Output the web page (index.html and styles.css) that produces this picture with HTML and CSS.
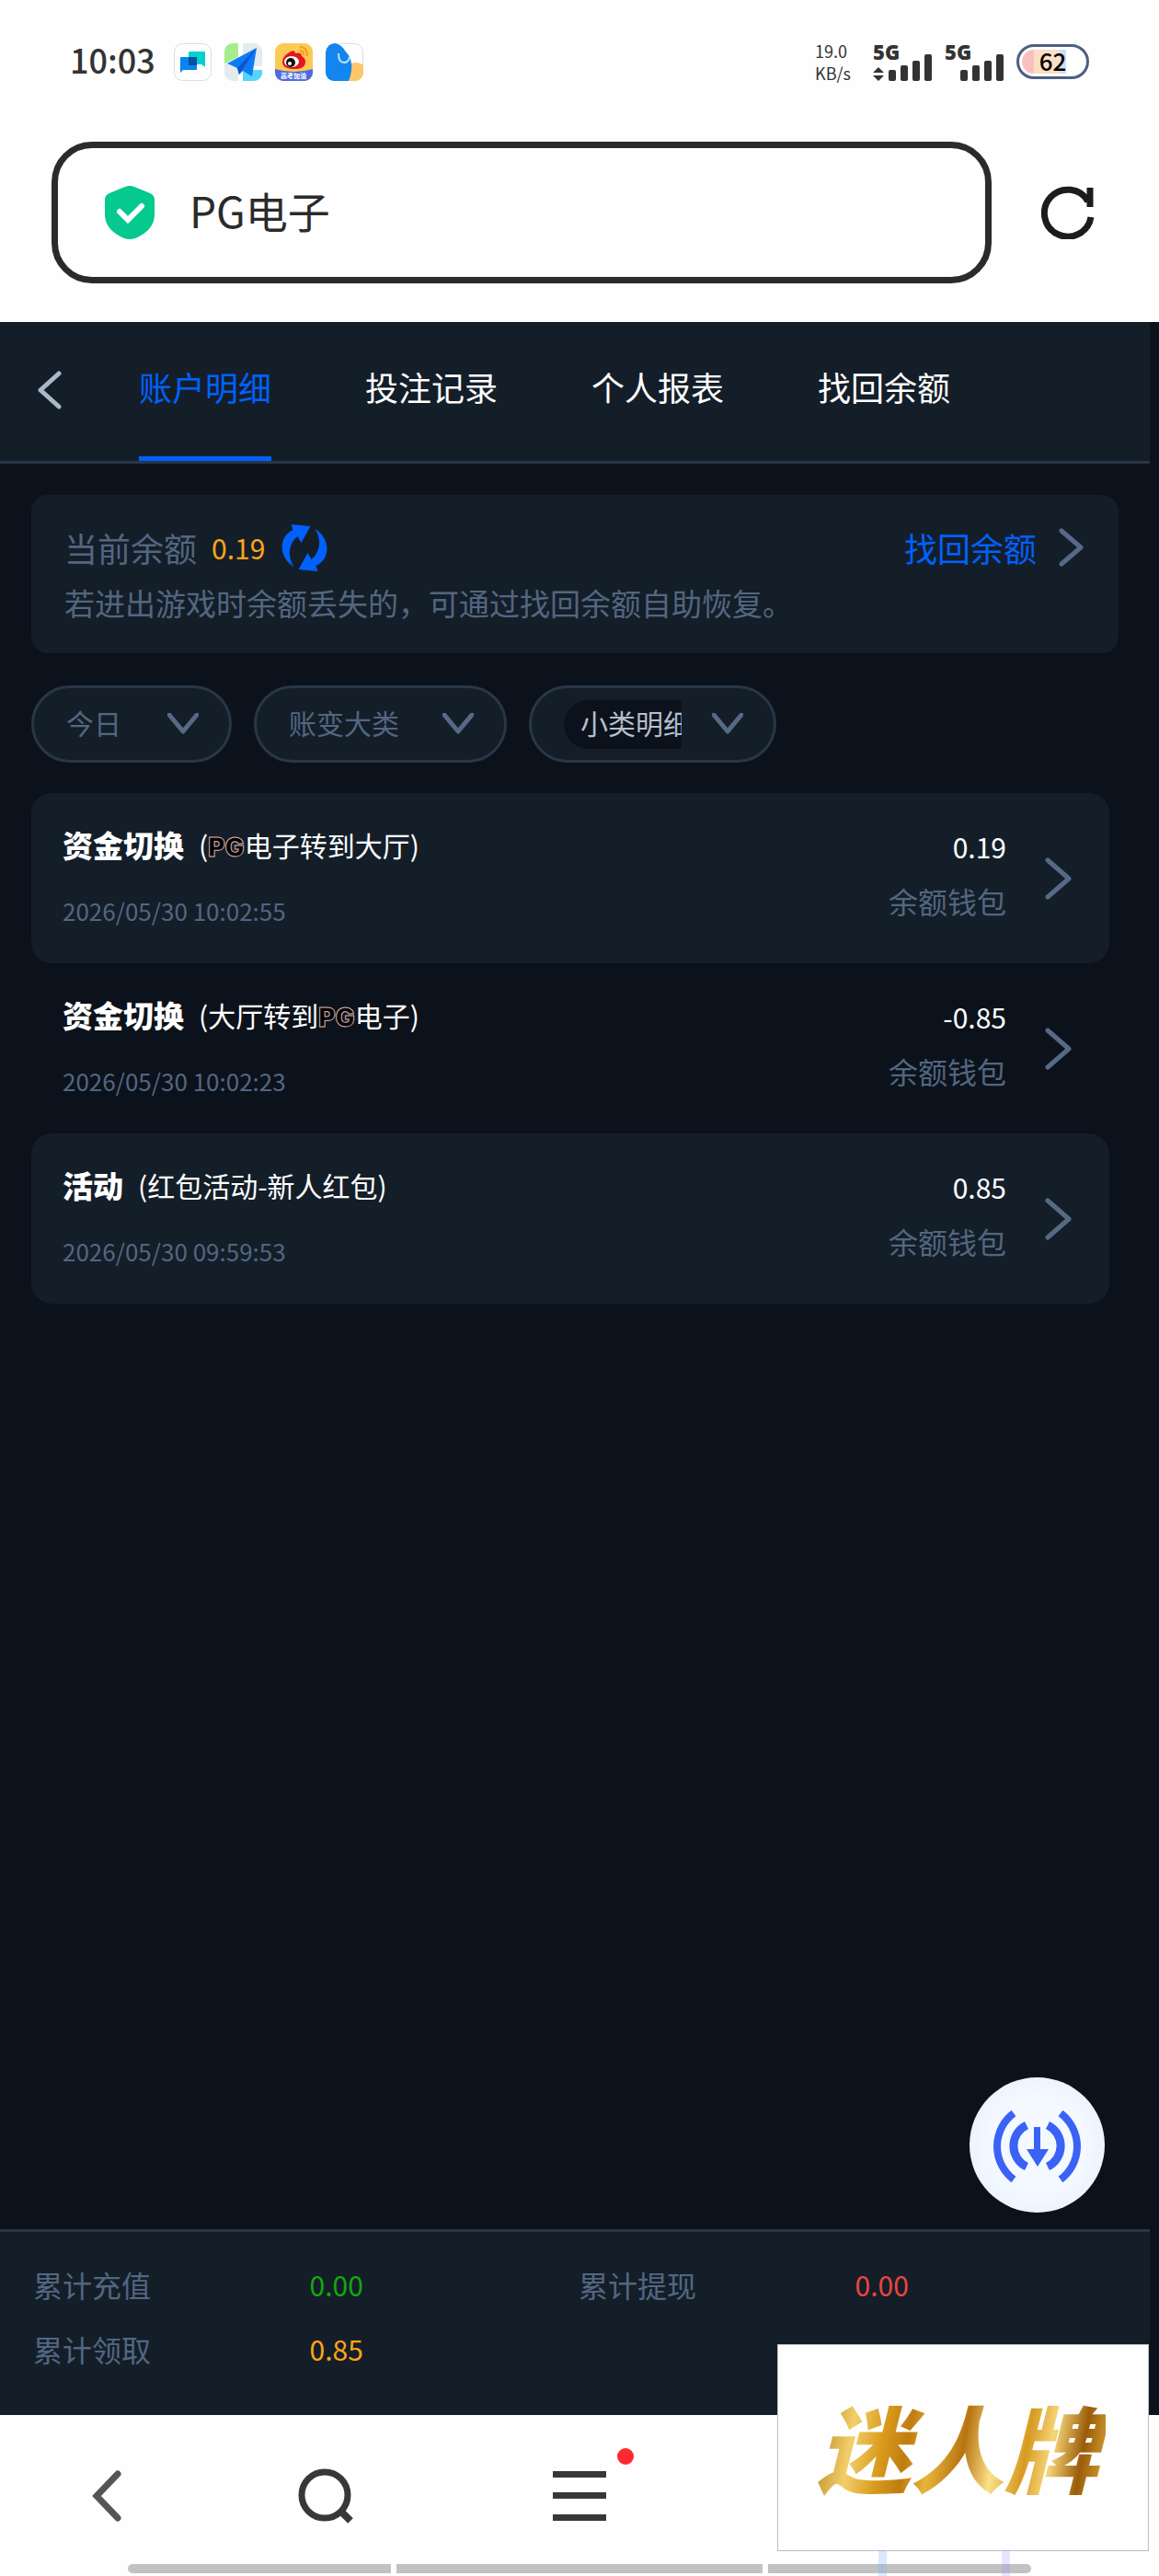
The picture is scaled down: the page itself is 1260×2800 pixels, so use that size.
FILE: index.html
```html
<!DOCTYPE html>
<html lang="zh-Hans">
<head>
<meta charset="utf-8">
<meta name="viewport" content="width=device-width, initial-scale=1">
<title>PG电子</title>
<link rel="stylesheet" href="styles.css">
</head>
<body>

<!-- 状态栏 -->
<div class="status-bar">
  <span class="time">10:03</span>
  <div class="apps">
    <svg width="41" height="41" viewBox="0 0 41 41">
      <rect x="0.5" y="0.5" width="40" height="40" rx="9" fill="#fff" stroke="#ddd"/>
      <path d="M17 9h16q1 0 1 1v16l-4-3H16V10q0-1 1-1z" fill="#05d0cf"/>
      <path d="M8 15h17v14H10l-3 3V16q0-1 1-1z" fill="#0a84f0"/>
      <path d="M16 15h9v9h-9z" fill="#0a4fa5"/>
    </svg>
    <svg width="41" height="41" viewBox="0 0 41 41">
      <clipPath id="r1"><rect width="41" height="41" rx="9"/></clipPath>
      <g clip-path="url(#r1)">
        <rect width="41" height="41" fill="#e4ebef"/>
        <path d="M0 0h15v15L0 22z" fill="#a6ec8b"/>
        <path d="M15 0h5v41h-5z" fill="#fff"/>
        <path d="M20 25l21 2v14H20z" fill="#55d5fb"/>
        <path d="M20 25h21v4H20z" fill="#fff"/>
        <path d="M35 5L3 22l11 5 2 7 4-4 10 6z" fill="#0d7bf5"/>
        <path d="M35 5L14 27l2 7 4-6z" fill="#0a55cc"/>
      </g>
    </svg>
    <svg width="41" height="41" viewBox="0 0 41 41">
      <clipPath id="r2"><rect width="41" height="41" rx="9"/></clipPath>
      <g clip-path="url(#r2)">
        <rect width="41" height="41" fill="#fdc955"/>
        <path d="M0 28q20 6 41 0v13H0z" fill="#4b6ce0"/>
        <path d="M8 20q0-6 9-11 5-2 5 2 7-2 7 3 4 2 4 6 0 8-12 8-13 0-13-8z" fill="#e6151b"/>
        <ellipse cx="18" cy="20" rx="8" ry="6" fill="#fff"/>
        <circle cx="17" cy="21" r="5" fill="#111"/>
        <circle cx="16" cy="22" r="2" fill="#fff"/>
        <path d="M27 4q8 0 8 10M27 8q4 0 4 5" fill="none" stroke="#f59a1b" stroke-width="2"/>
        <text x="20" y="38" font-size="7" font-weight="700" text-anchor="middle" fill="#fff">高考加油</text>
      </g>
    </svg>
    <svg width="41" height="41" viewBox="0 0 41 41">
      <clipPath id="r3"><rect width="41" height="41" rx="9"/></clipPath>
      <rect x="0.5" y="0.5" width="40" height="40" rx="9" fill="#fff" stroke="#ddd"/>
      <g clip-path="url(#r3)">
        <circle cx="33" cy="34" r="13" fill="#fdc66b"/>
        <path d="M0 10Q2 0 10 0q7 1 11 8 9 9 7 22-1 6-3 11H0z" fill="#1286ee"/>
        <path d="M14 11q0 10 6 10 5 0 6-6" fill="none" stroke="#bfe0ff" stroke-width="2"/>
      </g>
    </svg>
  </div>
  <div class="net-speed"><span>19.0</span><span>KB/s</span></div>
  <div class="signal">
    <span>5G</span>
    <svg width="64" height="30" viewBox="0 0 64 30">
      <path d="M0 21l6-6 6 6zM0 24h12l-6 6z"/>
      <rect x="17" y="18" width="8" height="12" rx="2"/>
      <rect x="30" y="13" width="8" height="17" rx="2"/>
      <rect x="43" y="8" width="8" height="22" rx="2"/>
      <rect x="56" y="1" width="8" height="29" rx="2"/>
    </svg>
  </div>
  <div class="signal">
    <span>5G</span>
    <svg width="64" height="30" viewBox="0 0 64 30">
      <rect x="17" y="18" width="8" height="12" rx="2"/>
      <rect x="30" y="13" width="8" height="17" rx="2"/>
      <rect x="43" y="8" width="8" height="22" rx="2"/>
      <rect x="56" y="1" width="8" height="29" rx="2"/>
    </svg>
  </div>
  <div class="battery">62</div>
</div>

<!-- 地址栏 -->
<div class="address-row">
  <label class="address">
    <svg width="54" height="58" viewBox="0 0 54 58">
      <path d="M22 1q5-2 10 0l17 7q5 2 5 7v16q0 17-21 26-6 2-12 0Q0 48 0 31V15q0-5 5-7z" fill="#05c98f"/>
      <path d="M16 28l9 9 15-15" fill="none" stroke="#fff" stroke-width="6" stroke-linecap="round"/>
    </svg>
    <input type="text" value="PG电子" aria-label="地址">
  </label>
  <button class="reload" aria-label="刷新">
    <svg width="58" height="58" viewBox="0 0 58 58" fill="none" stroke="#1c1c1c" stroke-width="7">
      <path d="M54 34A25.500 25.500 0 1 1 51 17"/>
      <path d="M53 2v21"/>
    </svg>
  </button>
</div>

<div class="page">
  <nav class="tabs">
    <button class="back" aria-label="返回">
      <svg width="26" height="42" viewBox="0 0 26 42"><path d="M23 3L3 21l20 18"/></svg>
    </button>
    <a href="#" class="tab active">账户明细</a>
    <a href="#" class="tab">投注记录</a>
    <a href="#" class="tab">个人报表</a>
    <a href="#" class="tab">找回余额</a>
  </nav>

  <main>
    <section class="balance">
      <div class="balance-line">
        <span>当前余额</span>
        <span class="balance-num">0.19</span>
        <button class="sync" aria-label="刷新余额">
          <svg width="50" height="51" viewBox="0 0 49 51" fill="#0061ff">
            <path id="arr" d="M13 46C-3 37-5 14 12 6L10 0l21 2-10 18-4-7C8 20 5 34 13 46z"/>
            <use href="#arr" transform="rotate(180 24.5 25.5)"/>
          </svg>
        </button>
        <a href="#" class="recover">找回余额
          <svg width="27" height="42" viewBox="0 0 27 42"><path d="M3 3l21 18L3 39"/></svg>
        </a>
      </div>
      <p class="tip">若进出游戏时余额丢失的，可通过找回余额自助恢复。</p>
    </section>

    <div class="filters">
      <label class="pill">
        <select class="day" aria-label="日期"><option>今日</option></select>
        <svg width="34" height="24" viewBox="0 0 34 24"><path d="M2 2l15 18L32 2"/></svg>
      </label>
      <label class="pill">
        <select class="kind" aria-label="账变大类"><option>账变大类</option></select>
        <svg width="34" height="24" viewBox="0 0 34 24"><path d="M2 2l15 18L32 2"/></svg>
      </label>
      <label class="pill">
        <select class="sub" aria-label="小类明细"><option>小类明细</option></select>
        <svg width="34" height="24" viewBox="0 0 34 24"><path d="M2 2l15 18L32 2"/></svg>
      </label>
    </div>

    <ul class="records">
      <li>
        <a href="#" class="record">
          <div class="info">
            <div class="name"><b>资金切换</b><span>(<span class="pg">PG</span>电子转到大厅)</span></div>
            <time>2026/05/30 10:02:55</time>
          </div>
          <div class="money"><span class="amount">0.19</span><span class="wallet">余额钱包</span></div>
          <svg width="30" height="46" viewBox="0 0 30 46"><path d="M3 3l23 20L3 43"/></svg>
        </a>
      </li>
      <li>
        <a href="#" class="record">
          <div class="info">
            <div class="name"><b>资金切换</b><span>(大厅转到<span class="pg">PG</span>电子)</span></div>
            <time>2026/05/30 10:02:23</time>
          </div>
          <div class="money"><span class="amount">-0.85</span><span class="wallet">余额钱包</span></div>
          <svg width="30" height="46" viewBox="0 0 30 46"><path d="M3 3l23 20L3 43"/></svg>
        </a>
      </li>
      <li>
        <a href="#" class="record">
          <div class="info">
            <div class="name"><b>活动</b><span>(红包活动-新人红包)</span></div>
            <time>2026/05/30 09:59:53</time>
          </div>
          <div class="money"><span class="amount">0.85</span><span class="wallet">余额钱包</span></div>
          <svg width="30" height="46" viewBox="0 0 30 46"><path d="M3 3l23 20L3 43"/></svg>
        </a>
      </li>
    </ul>
  </main>

  <footer class="summary">
    <span>累计充值</span><span class="green">0.00</span>
    <span>累计提现</span><span class="red">0.00</span>
    <span>累计领取</span><span class="orange">0.85</span>
  </footer>
</div>

<!-- 浏览器底栏 -->
<div class="browser-nav">
  <div class="nav-btns">
    <button aria-label="后退">
      <svg width="32" height="56" viewBox="0 0 32 56" fill="none" stroke="#555" stroke-width="7" stroke-linecap="round"><path d="M28 4L5 28l23 24"/></svg>
    </button>
    <button aria-label="搜索">
      <svg width="60" height="60" viewBox="0 0 60 60" fill="none" stroke="#383838" stroke-width="7"><circle cx="29" cy="29" r="25"/><path d="M46 46l11 11" stroke-width="8"/></svg>
    </button>
    <button class="menu" aria-label="菜单">
      <svg width="58" height="54" viewBox="0 0 58 54" fill="#383838"><path d="M0 0h58v7H0zM0 23h58v7H0zM0 47h58v7H0z"/></svg>
      <span class="dot"></span>
    </button>
  </div>
  <div class="home-bar"><i></i><i></i><i></i></div>
</div>

<button class="float-btn" aria-label="下载">
  <svg width="147" height="147" viewBox="0 0 147 147" fill="none" stroke="#3b62f6" stroke-width="8">
    <path d="M48 39A45 45 0 0 0 48 111M99 39A45 45 0 0 1 99 111"/>
    <path d="M62 52A25 25 0 0 0 62 97M85 52A25 25 0 0 1 85 97" stroke-width="9"/>
    <path d="M70 54h7v24h9L74 97 62 78h8z" fill="#3b62f6" stroke="none"/>
  </svg>
</button>

<div class="brand"><span>迷人牌</span></div>

</body>
</html>
```
FILE: styles.css
```css
* {
  box-sizing: border-box;
}
body {
  margin: 0;
  min-height: 100vh;
  display: flex;
  flex-direction: column;
  font-family: "Noto Sans CJK SC", sans-serif;
  background: #fefefe;
  color: #fff;
}
button {
  padding: 0;
  border: none;
  background: none;
  cursor: pointer;
}
a {
  color: inherit;
  text-decoration: none;
}
svg {
  display: block;
  flex-shrink: 0;
}

/* 状态栏 */
.status-bar {
  display: flex;
  align-items: center;
  height: 154px;
  padding: 0 76px 20px;
  color: #333;
}
.time {
  padding-bottom: 6px;
  font-size: 36px;
  font-weight: 500;
}
.apps {
  display: flex;
  gap: 14px;
  margin-left: 20px;
}
.net-speed {
  display: flex;
  flex-direction: column;
  margin-left: auto;
  margin-right: 24px;
  font-size: 18px;
  line-height: 24px;
}
.signal {
  margin-right: 14px;
  fill: #333;
}
.signal span {
  display: block;
  height: 12px;
  font: 800 22px/20px "Open Sans", sans-serif;
}
.battery {
  width: 79px;
  height: 38px;
  border: 3px solid #4c5f85;
  border-radius: 19px;
  background: linear-gradient(to right, #fcbfc0 0 13px, #fadfc4 13px 41px, #d0dcf5 41px 48px, #fff 48px) content-box;
  padding: 3px;
  font-size: 26px;
  font-weight: 500;
  line-height: 24px;
  text-align: center;
  color: #000;
}

/* 地址栏 */
.address-row {
  display: flex;
  align-items: center;
  padding: 0 70px 42px 56px;
}
.address {
  flex: 1;
  display: flex;
  align-items: center;
  gap: 38px;
  height: 154px;
  margin-right: 54px;
  padding: 0 51px;
  border: 7px solid #2b2b2b;
  border-radius: 44px;
}
.address input {
  flex: 1;
  min-width: 0;
  padding: 0 0 6px;
  border: none;
  outline: none;
  background: none;
  font: 46px "Noto Sans CJK SC", sans-serif;
  color: #2b2b2b;
}

.page {
  flex: 1;
  display: flex;
  flex-direction: column;
  padding-right: 10px;
  background: #0c121b;
}

/* 顶部标签 */
.tabs {
  display: flex;
  gap: 102px;
  height: 154px;
  padding-left: 41px;
  background: #141e29;
  border-bottom: 3px solid #283648;
}
.back {
  margin-right: -18px;
}
.back path {
  stroke: #aab8c8;
}
.back path,
.recover path,
.pill path,
.record path {
  fill: none;
  stroke-width: 5;
  stroke-linecap: round;
  stroke-linejoin: round;
}
.tab {
  font-size: 36px;
  line-height: 140px;
  white-space: nowrap;
}
.back svg {
  margin-bottom: 4px;
}
.tab.active {
  color: #0061ff;
  border-bottom: 5px solid #0061ff;
}

main {
  flex: 1;
  padding: 34px;
}
.balance {
  height: 172px;
  padding: 32px 38px 0 36px;
  border-radius: 18px;
  background: #141e29;
  color: #536680;
}
.balance-line {
  display: flex;
  align-items: center;
  height: 50px;
  font-size: 36px;
  line-height: 48px;
}
.balance-num {
  margin: 0 18px 0 16px;
  font-size: 30px;
  color: #ffa516;
}
.recover {
  display: flex;
  align-items: center;
  gap: 24px;
  margin-left: auto;
  color: #0061ff;
}
.recover path,
.pill path,
.record path {
  stroke: #566a85;
}
.tip {
  margin: 11px 0 0;
  font-size: 33px;
  line-height: 48px;
}

/* 筛选 */
.filters {
  display: flex;
  gap: 24px;
  margin: 35px 0 33px;
}
.pill {
  display: flex;
  align-items: center;
  height: 84px;
  padding: 0 33px 0 35px;
  border: 3px solid #283648;
  border-radius: 42px;
  background: #141e29;
}
.pill select {
  appearance: none;
  height: 53px;
  padding: 0 0 4px;
  border: none;
  outline: none;
  background: none;
  font: 30px "Noto Sans CJK SC", sans-serif;
  color: #536680;
}
.day {
  width: 110px;
}
.kind {
  width: 167px;
}
.pill .sub {
  width: 128px;
  margin-right: 33px;
  padding-left: 18px;
  border-radius: 27px 0 0 27px;
  background: #0c121b;
  color: #b5bfcb;
  text-overflow: clip;
}

/* 记录列表 */
.records {
  list-style: none;
  margin: 0 10px 0 0;
  padding: 0;
}
.record {
  display: flex;
  align-items: center;
  height: 185px;
  padding: 0 40px 0 34px;
  border-radius: 22px;
}
.records li:nth-child(odd) .record {
  background: #141e29;
}
.info {
  flex: 1;
  padding-bottom: 6px;
}
.name {
  display: flex;
  align-items: center;
  gap: 16px;
  height: 48px;
  font-size: 30px;
}
.name b {
  font-size: 33px;
  font-weight: 900;
}
.pg {
  font: 900 28px Inter, sans-serif;
  color: #000;
  -webkit-text-stroke: 1px #d9b3b0;
}
time {
  display: block;
  margin-top: 28px;
  font-size: 26px;
  line-height: 40px;
  color: #536680;
}
.money {
  display: flex;
  flex-direction: column;
  align-items: flex-end;
  margin: 0 42px 0 20px;
  padding-bottom: 12px;
}
.amount {
  font-size: 30px;
  line-height: 60px;
}
.wallet {
  font-size: 32px;
  line-height: 58px;
  color: #536680;
}

/* 汇总 */
.summary {
  display: grid;
  grid-template-columns: repeat(4, 1fr);
  padding: 22px 28px 37px 36px;
  border-top: 3px solid #283648;
  background: #141e29;
  font-size: 32px;
  line-height: 70px;
  color: #536680;
}
.green,
.red,
.orange {
  padding-left: 4px;
  font-size: 30px;
}
.green { color: #12a80d; }
.red { color: #e8463f; }
.orange { color: #ffa516; }

/* 浏览器底栏 */
.browser-nav {
  height: 175px;
  padding-top: 56px;
}
.nav-btns {
  display: grid;
  grid-template-columns: 224px 277px 58px;
  justify-items: start;
  align-items: center;
  height: 64px;
  padding-left: 100px;
}
.menu {
  position: relative;
}
.dot {
  position: absolute;
  top: -25px;
  right: -30px;
  width: 18px;
  height: 18px;
  border-radius: 50%;
  background: #fb2a30;
}
.home-bar {
  display: grid;
  grid-template-columns: 286fr 397fr 286fr;
  gap: 6px;
  margin: 42px 11% 0;
}
.home-bar i {
  height: 10px;
  background: #c2c2c2;
}
.home-bar i:first-child {
  border-radius: 5px 0 0 5px;
}
.home-bar i:last-child {
  border-radius: 0 5px 5px 0;
}

/* 悬浮按钮 */
.float-btn {
  position: fixed;
  right: 59px;
  bottom: 395px;
  border-radius: 50%;
  background: radial-gradient(#f3f9ff 50%, #e6ecfa);
}

.brand {
  position: fixed;
  right: 11px;
  bottom: 27px;
  width: 404px;
  height: 225px;
  display: flex;
  align-items: center;
  justify-content: center;
  padding: 0 12px 6px 0;
  border: 1px solid #bdbfc3;
  background: #fefefe;
}
.brand span {
  font-size: 102px;
  font-weight: 900;
  font-style: italic;
  line-height: 120px;
  padding: 0 8px;
  color: transparent;
  background: linear-gradient(100deg, #a8700a, #f3cf6a 16%, #d99b1c 26%, #c07c10 34%, #e6b53c 42%, #b87410 52%, #fbe08a 62%, #d79a20 72%, #f7d67a 80%, #9a5c08 90%, #e0b040);
  -webkit-background-clip: text;
  background-clip: text;
}
.brand::before,
.brand::after {
  content: "";
  position: absolute;
  top: 100%;
  left: 109px;
  width: 9px;
  height: 28px;
  background: rgba(120, 175, 255, 0.28);
}
.brand::after {
  left: 243px;
  background: rgba(150, 140, 255, 0.22);
}
```
